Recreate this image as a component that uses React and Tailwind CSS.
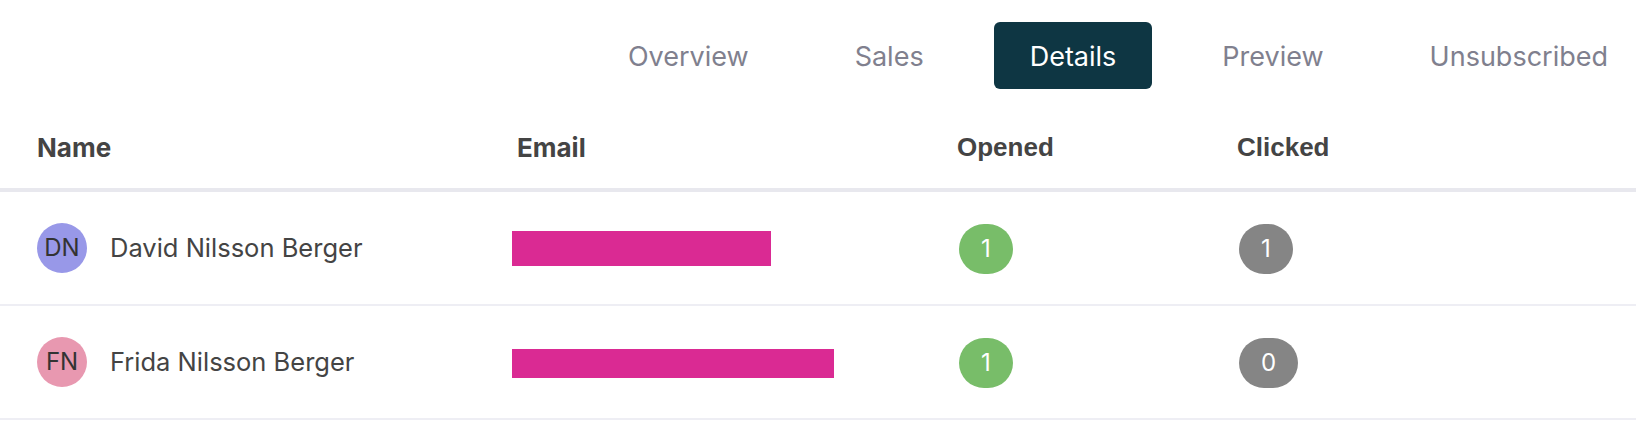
const TABS = ["Overview", "Sales", "Details", "Preview", "Unsubscribed"];

const ROWS = [
  { initials: "DN", name: "David Nilsson Berger", avatar: "bg-[#9898e8]", bar: "w-[259px] h-[35px]", opened: 1, clicked: 1 },
  { initials: "FN", name: "Frida Nilsson Berger", avatar: "bg-[#e898b0]", bar: "w-[322px] h-[29px] mt-[2px]", opened: 1, clicked: 0 },
];

function Badge({ value, colour }) {
  return (
    <span
      className={`inline-flex items-center justify-center h-[50px] px-[22px] rounded-full text-white text-[24px] ${colour}`}
    >
      {value}
    </span>
  );
}

export default function App() {
  return (
    <div className="w-full min-h-screen bg-white overflow-hidden" style={{ fontFamily: "Inter, 'Liberation Sans', sans-serif" }}>

      {/* tabs */}
      <div className="flex justify-end gap-[34px] pt-[22px] mr-[-8px]">
        {TABS.map((tab) => (
          <div
            key={tab}
            className={`h-[67px] px-[36px] pt-[3px] flex items-center rounded-[6px] text-[27px] ${
              tab === "Details" ? "bg-[#0e3643] text-white" : "text-[#80808e]"
            }`}
          >
            {tab}
          </div>
        ))}
      </div>

      {/* table header */}
      <div className="grid grid-cols-[480px_440px_280px_1fr] pl-[37px] h-[103px] pt-[17px] items-center border-b-4 border-[#e8e8ee] text-[#444]">
        <div className="text-[26px] font-bold">Name</div>
        <div className="text-[26px] font-bold">Email</div>
        <div className="text-[26px] font-bold" style={{ fontFamily: "'Liberation Sans', Arial, sans-serif" }}>Opened</div>
        <div className="text-[26px] font-bold" style={{ fontFamily: "'Liberation Sans', Arial, sans-serif" }}>Clicked</div>
      </div>

      {/* rows */}
      {ROWS.map((row) => (
        <div
          key={row.name}
          className="grid grid-cols-[480px_440px_280px_1fr] pl-[37px] h-[114px] items-center border-b-2 border-[#eeeef4]"
        >
          <div className="flex items-center gap-[23px]">
            <div className={`w-[50px] h-[50px] rounded-full flex items-center justify-center text-[24px] text-[#333] ${row.avatar}`}>
              {row.initials}
            </div>
            <span className="text-[25.5px] text-[#444]">{row.name}</span>
          </div>
          <div>
            <div className={`bg-[#da2a93] ml-[-5px] ${row.bar}`} />
          </div>
          <div className="pl-[2px] pt-[2px]">
            <Badge value={row.opened} colour="bg-[#78bd69]" />
          </div>
          <div className="pl-[2px] pt-[2px]">
            <Badge value={row.clicked} colour="bg-[#858585]" />
          </div>
        </div>
      ))}
    </div>
  );
}
